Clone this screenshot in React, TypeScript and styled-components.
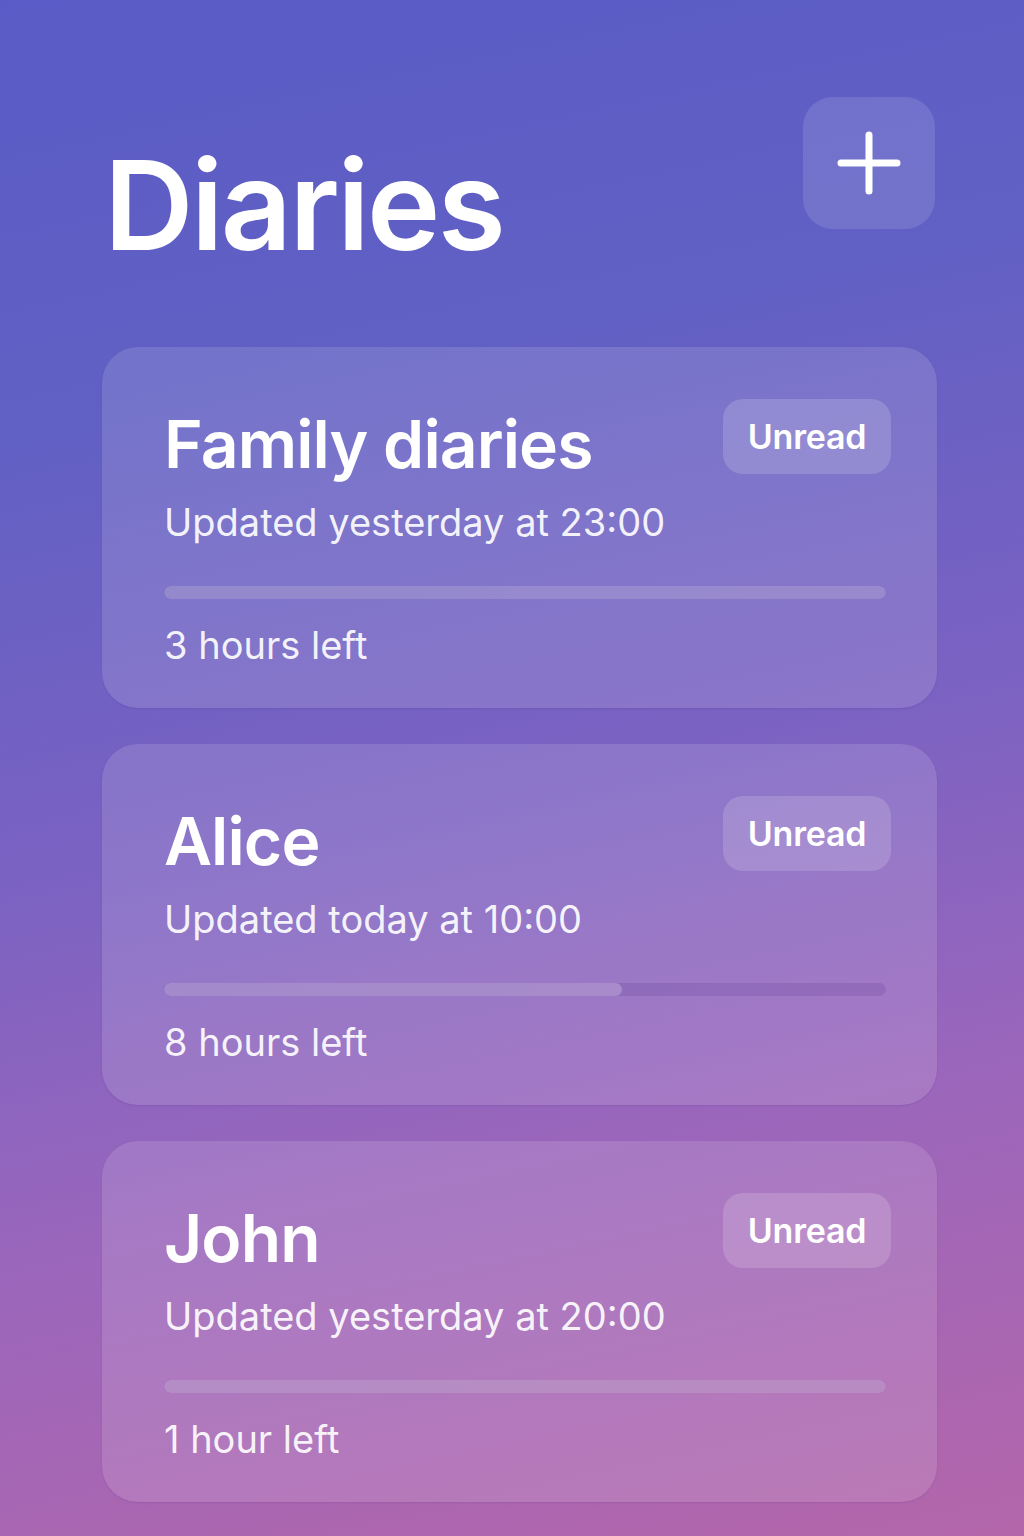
import React from "react";
import styled, { createGlobalStyle } from "styled-components";

const Global = createGlobalStyle`
  html, body { margin: 0; padding: 0; }
  body {
    font-family: Inter, "Noto Sans", "Liberation Sans", sans-serif;
    background: linear-gradient(168deg, #5a5bc6 0%, #6160c4 25%, #7a62c2 50%, #9a66bc 72%, #b466aa 100%);
    min-height: 1536px;
    color: #fff;
  }
`;

const Page = styled.div`
  width: 1024px;
  min-height: 1536px;
  box-sizing: border-box;
  padding: 97px 87px 0 102px;
  display: flex;
  flex-direction: column;
`;

const Header = styled.header`
  display: flex;
  justify-content: space-between;
  align-items: flex-start;
  height: 132px;
  margin-bottom: 118px;
`;

const Title = styled.h1`
  margin: 46px 0 0 2px;
  font-size: 124px;
  font-weight: 600;
  letter-spacing: -2.6px;
  line-height: 1;
`;

const AddButton = styled.button`
  width: 132px;
  height: 132px;
  margin-right: 2px;
  border: none;
  border-radius: 30px;
  background: rgba(255, 255, 255, 0.12);
  display: flex;
  align-items: center;
  justify-content: center;
  padding: 0;
  cursor: pointer;
`;

const List = styled.div`
  display: flex;
  flex-direction: column;
  gap: 36px;
`;

const Card = styled.section`
  border-radius: 36px;
  background: rgba(255, 255, 255, 0.13);
  box-shadow: 0 1px 2px rgba(60, 30, 120, 0.12);
  padding: 52px 46px 0 62px;
  height: 361px;
  box-sizing: border-box;
`;

const TopRow = styled.div`
  display: flex;
  justify-content: space-between;
  align-items: flex-start;
`;

const Name = styled.h2`
  margin: 6px 0 0 0;
  font-size: 66px;
  font-weight: 600;
  letter-spacing: -0.9px;
  line-height: 78px;
`;

const Badge = styled.span`
  width: 168px;
  height: 75px;
  border-radius: 20px;
  background: rgba(255, 255, 255, 0.16);
  display: flex;
  align-items: center;
  justify-content: center;
  font-size: 34px;
  font-weight: 600;
  letter-spacing: -0.2px;
`;

const Updated = styled.p`
  margin: 14px 0 0 0;
  font-size: 38px;
  font-weight: 400;
  line-height: 50px;
  color: rgba(255, 255, 255, 0.92);
`;

const Track = styled.div`
  margin: 39px 5px 0 0;
  height: 13px;
  border-radius: 7px;
  background: rgba(60, 20, 120, 0.13);
  overflow: hidden;
`;

const Fill = styled.div`
  height: 100%;
  border-radius: 7px;
  background: rgba(255, 255, 255, 0.22);
`;

const Left = styled.p`
  margin: 21px 0 0 0;
  font-size: 38px;
  font-weight: 400;
  line-height: 50px;
  color: rgba(255, 255, 255, 0.92);
`;

const diaries = [
  { name: "Family diaries", updated: "Updated yesterday at 23:00", pct: 100, left: "3 hours left" },
  { name: "Alice", updated: "Updated today at 10:00", pct: 63.4, left: "8 hours left" },
  { name: "John", updated: "Updated yesterday at 20:00", pct: 100, left: "1 hour left" },
];

export default function App() {
  return (
    <>
      <Global />
      <Page>
        <Header>
          <Title>Diaries</Title>
          <AddButton aria-label="Add diary">
            <svg width="64" height="64" viewBox="0 0 64 64">
              <path d="M32 4v56M4 32h56" stroke="#fff" strokeWidth="7" strokeLinecap="round" fill="none" />
            </svg>
          </AddButton>
        </Header>
        <List>
          {diaries.map((d) => (
            <Card key={d.name}>
              <TopRow>
                <Name>{d.name}</Name>
                <Badge>Unread</Badge>
              </TopRow>
              <Updated>{d.updated}</Updated>
              <Track>
                <Fill style={{ width: `${d.pct}%` }} />
              </Track>
              <Left>{d.left}</Left>
            </Card>
          ))}
        </List>
      </Page>
    </>
  );
}
